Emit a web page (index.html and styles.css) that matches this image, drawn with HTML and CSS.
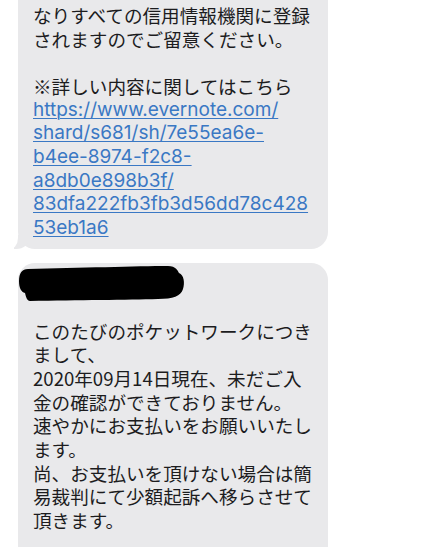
FILE: index.html
```html
<!DOCTYPE html>
<html lang="ja">
<head>
<meta charset="utf-8">
<link rel="stylesheet" href="styles.css">
</head>
<body>
<div class="thread">
  <div class="bubble bubble-first">
    <p class="msg">なりすべての信用情報機関に登録<br>されますのでご留意ください。<br><br>※詳しい内容に関してはこちら</p>
    <p class="msg link-line"><a class="link" href="#">https://www.evernote.com/<br>shard/s681/sh/7e55ea6e-<br>b4ee-8974-f2c8-<br>a8db0e898b3f/<br>83dfa222fb3fb3d56dd78c428<br>53eb1a6</a></p>
  </div>
  <div class="bubble bubble-second">
    <svg class="redact" width="170" height="40" viewBox="0 0 170 40" aria-hidden="true">
      <path d="M 10 6 C 60 5, 120 3, 150 3 C 158 3, 160 8, 161 10 C 166 12, 167 20, 165 26 C 163 33, 155 36, 140 36 C 110 37, 60 37, 12 38 C 9 38, 8 34, 7 30 C 3 29, 1 25, 1 18 C 1 10, 4 6, 10 6 Z" fill="#000"/>
    </svg>
    <p class="msg msg-body">このたびのポケットワークにつき<br>まして、<br>2020年09月14日現在、未だご入<br>金の確認ができておりません。<br>速やかにお支払いをお願いいたし<br>ます。<br>尚、お支払いを頂けない場合は簡<br>易裁判にて少額起訴へ移らさせて<br>頂きます。</p>
  </div>
</div>
</body>
</html>
```
FILE: styles.css
```css
html, body {
  margin: 0;
  padding: 0;
  background: #ffffff;
}
body {
  width: 440px;
  height: 547px;
  overflow: hidden;
  font-family: "Noto Sans CJK JP", "Noto Sans", sans-serif;
}
.thread {
  display: flex;
  flex-direction: column;
  gap: 14px;
  padding-left: 18px;
}
.bubble {
  position: relative;
  width: 310px;
  box-sizing: border-box;
  background: #e9e9eb;
  padding: 0 8px 0 15px;
}
.bubble-first {
  border-radius: 0 0 17px 17px;
  padding-top: 3px;
  padding-bottom: 9px;
}
.bubble-first::before {
  content: "";
  position: absolute;
  left: -4px;
  bottom: 0;
  width: 16px;
  height: 14px;
  background: #e9e9eb;
  border-bottom-right-radius: 14px 12px;
}
.bubble-first::after {
  content: "";
  position: absolute;
  left: -10px;
  bottom: -1px;
  width: 10px;
  height: 16px;
  background: #ffffff;
  border-bottom-right-radius: 10px 12px;
}
.bubble-second {
  border-radius: 17px 17px 0 0;
  height: 300px;
  padding-top: 0;
}
.redact {
  display: block;
  margin-left: -15px;
}
.msg {
  margin: 0;
  font-size: 18.6px;
  line-height: 23.65px;
  color: #1c1c1e;
  white-space: nowrap;
  letter-spacing: 0;
}
.link-line {
  font-family: Inter, "Noto Sans", sans-serif;
  font-size: 19px;
}
.msg-body {
  margin-top: 16px;
}
.link {
  color: #3a78c4;
  text-decoration: underline;
  text-decoration-thickness: 1px;
  text-underline-offset: 2px;
}
```
